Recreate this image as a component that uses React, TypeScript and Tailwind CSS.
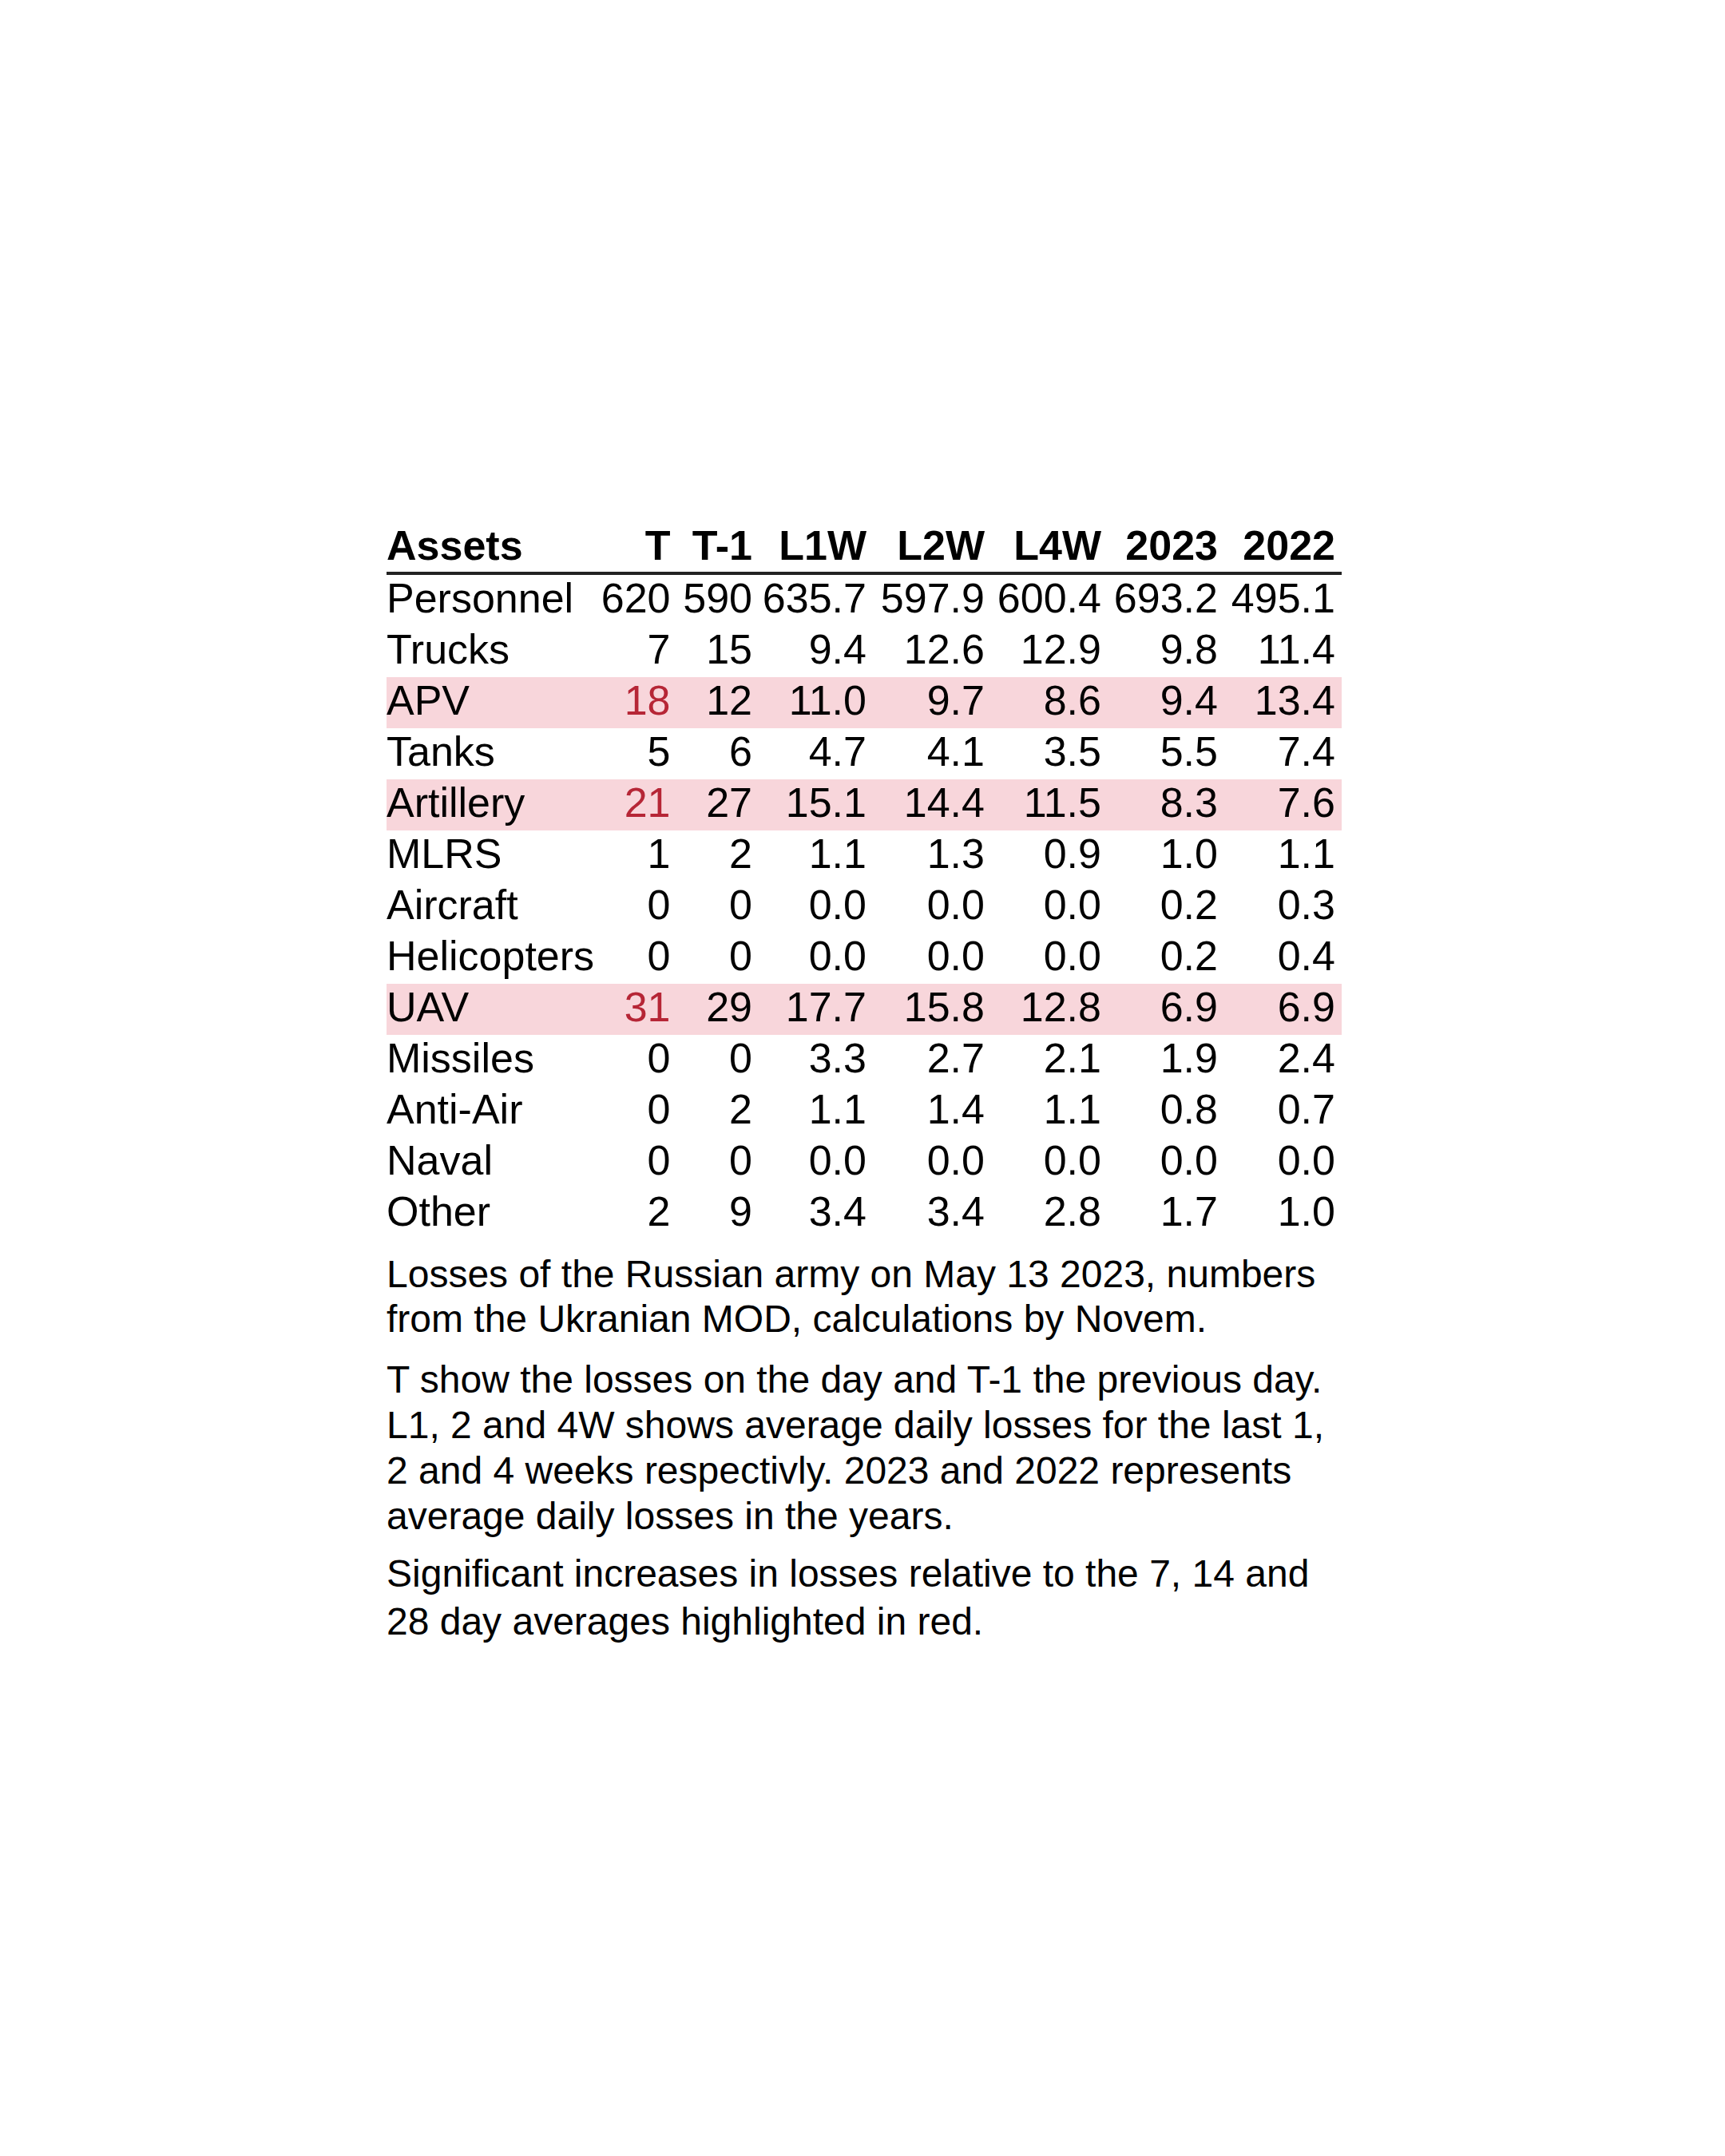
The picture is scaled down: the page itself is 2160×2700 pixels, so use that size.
import React from 'react';

type Row = {
  name: string;
  values: string[];
  highlight?: boolean;
};

const headers = ['T', 'T-1', 'L1W', 'L2W', 'L4W', '2023', '2022'];

const rows: Row[] = [
  { name: 'Personnel', values: ['620', '590', '635.7', '597.9', '600.4', '693.2', '495.1'] },
  { name: 'Trucks', values: ['7', '15', '9.4', '12.6', '12.9', '9.8', '11.4'] },
  { name: 'APV', values: ['18', '12', '11.0', '9.7', '8.6', '9.4', '13.4'], highlight: true },
  { name: 'Tanks', values: ['5', '6', '4.7', '4.1', '3.5', '5.5', '7.4'] },
  { name: 'Artillery', values: ['21', '27', '15.1', '14.4', '11.5', '8.3', '7.6'], highlight: true },
  { name: 'MLRS', values: ['1', '2', '1.1', '1.3', '0.9', '1.0', '1.1'] },
  { name: 'Aircraft', values: ['0', '0', '0.0', '0.0', '0.0', '0.2', '0.3'] },
  { name: 'Helicopters', values: ['0', '0', '0.0', '0.0', '0.0', '0.2', '0.4'] },
  { name: 'UAV', values: ['31', '29', '17.7', '15.8', '12.8', '6.9', '6.9'], highlight: true },
  { name: 'Missiles', values: ['0', '0', '3.3', '2.7', '2.1', '1.9', '2.4'] },
  { name: 'Anti-Air', values: ['0', '2', '1.1', '1.4', '1.1', '0.8', '0.7'] },
  { name: 'Naval', values: ['0', '0', '0.0', '0.0', '0.0', '0.0', '0.0'] },
  { name: 'Other', values: ['2', '9', '3.4', '3.4', '2.8', '1.7', '1.0'] },
];

// column box widths measured off the picture, last one is the right padding
const gridCols = 'grid grid-cols-[268px_87.5px_102.5px_143px_148px_146px_146px_147px_8px]';

function TableRow({ row }: { row: Row }) {
  return (
    <div className={`${gridCols} h-[64px] ${row.highlight ? 'bg-[#f8d6db]' : ''}`}>
      <div className="text-left leading-[59px] pb-[5px] whitespace-nowrap">{row.name}</div>
      {row.values.map((v, i) => (
        <div
          key={i}
          className={`text-right leading-[59px] pb-[5px] whitespace-nowrap ${
            row.highlight && i === 0 ? 'text-[#b62636]' : ''
          }`}
        >
          {v}
        </div>
      ))}
      <div />
    </div>
  );
}

export default function App() {
  return (
    <div
      className="min-h-[2700px] w-[2160px] bg-white text-black"
      style={{ fontFamily: '"Liberation Sans", Arial, sans-serif' }}
    >
      <div className="pt-[652px] pl-[484px]">
        <div className="w-[1196px] text-[52px]">
          {/* header: 64px of text plus the 4px rule under it */}
          <div className={`${gridCols} h-[68px] font-bold border-b-[4px] border-[#222222]`}>
            <div className="text-left leading-[62px] pb-[2px]">Assets</div>
            {headers.map(h => (
              <div key={h} className="text-right leading-[62px] pb-[2px] whitespace-nowrap">
                {h}
              </div>
            ))}
            <div />
          </div>

          {rows.map(r => (
            <TableRow key={r.name} row={r} />
          ))}
        </div>

        <div className="w-[1196px] text-[48px] whitespace-nowrap">
          <p className="mt-[16px] leading-[56px]">
            Losses of the Russian army on May 13 2023, numbers
            <br />
            from the Ukranian MOD, calculations by Novem.
          </p>
          <p className="mt-[19px] leading-[57px]">
            T show the losses on the day and T-1 the previous day.
            <br />
            L1, 2 and 4W shows average daily losses for the last 1,
            <br />
            2 and 4 weeks respectivly. 2023 and 2022 represents
            <br />
            average daily losses in the years.
          </p>
          <p className="mt-[14px] leading-[60px]">
            Significant increases in losses relative to the 7, 14 and
            <br />
            28 day averages highlighted in red.
          </p>
        </div>
      </div>
    </div>
  );
}
